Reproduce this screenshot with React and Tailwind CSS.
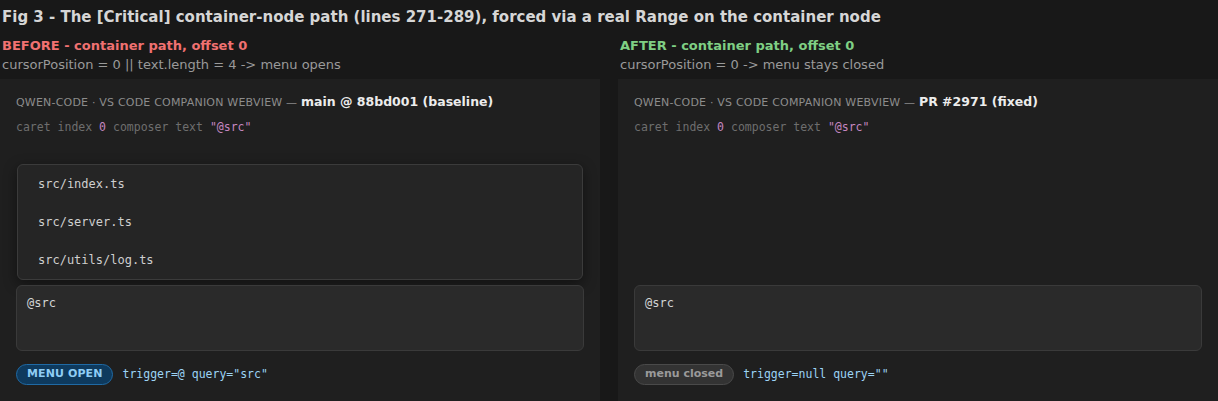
import React from "react";

const sans = { fontFamily: '"DejaVu Sans", sans-serif' };

function Panel({ label, menuOpen }) {
  return (
    <div className="bg-[#1f1f1f] px-4 pt-[14px] pb-4 flex flex-col">
      <div className="text-[11px] leading-[18px] text-[#8c8c8c] tracking-[0.2px]">
        QWEN-CODE · VS CODE COMPANION WEBVIEW —{" "}
        <span className="text-[12.5px] font-bold text-[#ececec] tracking-normal">{label}</span>
      </div>
      <div className="mt-[6px] font-['DejaVu_Sans_Mono',monospace] text-[11.5px] leading-[18px] text-[#6e6e6e]">
        caret index <span className="text-[#c586c0]">0</span> composer text{" "}
        <span className="text-[#c586c0]">"@src"</span>
      </div>
      <div className="h-[149px] flex flex-col justify-end">
        {menuOpen && (
          <div className="mb-[5px] mx-[1px] rounded-[6px] border border-[#3b3b3b] bg-[#252525] shadow-[0_4px_14px_rgba(0,0,0,0.45)] font-['DejaVu_Sans_Mono',monospace] text-[12px] text-[#cfcfcf]">
            {["src/index.ts", "src/server.ts", "src/utils/log.ts"].map((f) => (
              <div key={f} className="px-5 h-[38px] flex items-center">
                {f}
              </div>
            ))}
          </div>
        )}
      </div>
      <div className="h-[66px] rounded-[6px] border border-[#3a3a3a] bg-[#2a2a2a] px-[10px] pt-[8px] font-['DejaVu_Sans_Mono',monospace] text-[12px] text-[#d4d4d4]">
        @src
      </div>
      <div className="mt-[13px] flex items-center gap-[9px]">
        {menuOpen ? (
          <span className="h-[21px] px-[10px] rounded-full border border-[#1f6aa5] bg-[#0e3a5e] text-[#8fcdf5] text-[11px] font-bold tracking-[0.1px] flex items-center">
            MENU OPEN
          </span>
        ) : (
          <span className="h-[21px] px-[10px] rounded-full border border-[#4a4a4a] bg-[#333333] text-[#9a9a9a] text-[11px] font-bold flex items-center">
            menu closed
          </span>
        )}
        <span className="font-['DejaVu_Sans_Mono',monospace] text-[11.5px] text-[#9cd3f5]">
          {menuOpen ? 'trigger=@ query="src"' : 'trigger=null query=""'}
        </span>
      </div>
    </div>
  );
}

export default function App() {
  return (
    <div className="bg-[#181818] w-[1218px] h-[401px] overflow-hidden" style={sans}>
      <div className="px-[2px] pt-[6px] text-[15px] font-bold leading-[22px] text-[#d6d6d6]">
        Fig 3 - The [Critical] container-node path (lines 271-289), forced via a real Range on the container node
      </div>
      <div className="mt-[9px] grid grid-cols-2 gap-[18px]">
        <div className="flex flex-col">
          <div className="px-[2px]">
            <div className="text-[13px] font-bold leading-[18px] text-[#f07171]">
              BEFORE - container path, offset 0
            </div>
            <div className="text-[13px] leading-[19px] text-[#9a9a9a]">
              cursorPosition = 0 || text.length = 4 -&gt; menu opens
            </div>
          </div>
          <div className="mt-[5px]">
            <Panel label="main @ 88bd001 (baseline)" menuOpen />
          </div>
        </div>
        <div className="flex flex-col">
          <div className="px-[2px]">
            <div className="text-[13px] font-bold leading-[18px] text-[#7fcf84]">
              AFTER - container path, offset 0
            </div>
            <div className="text-[13px] leading-[19px] text-[#9a9a9a]">
              cursorPosition = 0 -&gt; menu stays closed
            </div>
          </div>
          <div className="mt-[5px]">
            <Panel label="PR #2971 (fixed)" menuOpen={false} />
          </div>
        </div>
      </div>
    </div>
  );
}
